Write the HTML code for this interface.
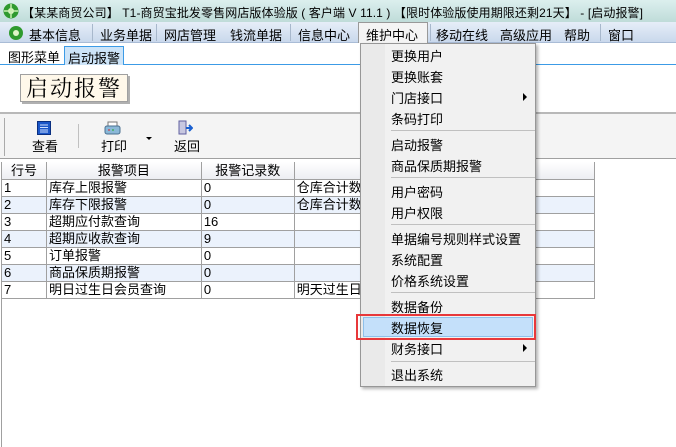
<!DOCTYPE html>
<html><head><meta charset="utf-8"><style>
*{margin:0;padding:0;box-sizing:border-box}
body{width:676px;height:447px;overflow:hidden;background:#fff;font-family:"Liberation Sans","Noto Sans CJK SC",sans-serif;font-size:12px;color:#000;position:relative}
.abs{position:absolute}
#title{left:0;top:0;width:676px;height:22px;background:linear-gradient(#dcefee,#bfdcd9);}
#title span{position:absolute;left:22px;top:4px;font-size:12px;white-space:nowrap;letter-spacing:0.1px}
#menubar{left:0;top:22px;width:676px;height:21px;background:linear-gradient(#e6eef8,#c9d8ec);border-bottom:1px solid #a9bcd6}
.mi{position:absolute;top:3px;font-size:13px;white-space:nowrap}
.msep{position:absolute;top:2px;width:1px;height:17px;background:#a8b8cc}
#tabs{left:0;top:43px;width:676px;height:22px;background:#fff;border-bottom:1px solid #3c9be6}
.tab{position:absolute;top:3px;height:19px;font-size:13px;padding:1px 3px}
#banner{left:20px;top:74px;width:108px;height:28px;background:#fff8ea;border:1px solid #a0a0a0;box-shadow:2px 2px 0 #b0b0b0;font-family:"Noto Serif CJK SC","Liberation Serif",serif;font-size:22px;line-height:26px;text-align:center;letter-spacing:2px}
#tb{left:0;top:112px;width:676px;height:47px;background:#f4f4f4;border-top:2px solid #b8b8b8;border-bottom:1px solid #a0a0a0}
.tbl{position:absolute;top:22px;font-size:13px}
#grid{left:1px;top:162px;width:594px;border-collapse:collapse;font-size:13px}
#grid td{border:1px solid #a0a0a0;height:17px;padding:0 2px;line-height:15px;white-space:nowrap;overflow:hidden}
#grid tr.h td{background:linear-gradient(#fff,#eceef2);text-align:center;border-top:none}
#grid tr.alt td{background:#ebf2fc}
#menu{left:360px;top:43px;width:176px;height:344px;background:#f1f1f1;border:1px solid #979797;box-shadow:2px 2px 3px rgba(0,0,0,.3)}
#menu .ic{position:absolute;left:0;top:0;width:24px;height:100%;background:#eaeaea}
.it{position:absolute;left:30px;font-size:13px;white-space:nowrap}
.sp{position:absolute;left:30px;width:144px;height:1px;background:#c0c0c0}
.arr{position:absolute;left:162px;width:0;height:0;border-left:4px solid #000;border-top:4px solid transparent;border-bottom:4px solid transparent}
</style></head><body>
<div id="title" class="abs">
<svg class="abs" style="left:3px;top:3px" width="16" height="16"><circle cx="8" cy="8" r="7.5" fill="#2f9a2f"/><circle cx="8" cy="8" r="3" fill="#dff5c8"/><path d="M8 1v14M1 8h14" stroke="#c8efb0" stroke-width="1.5"/></svg>
<span>【某某商贸公司】 T1-商贸宝批发零售网店版体验版 ( 客户端 V 11.1 ) 【限时体验版使用期限还剩21天】 - [启动报警]</span></div>
<div id="menubar" class="abs">
<svg class="abs" style="left:8px;top:3px" width="16" height="16"><circle cx="8" cy="8" r="7" fill="#2f9a2f"/><circle cx="8" cy="8" r="3" fill="#dff5c8"/></svg>
<span class="mi" style="left:29px">基本信息</span><div class="msep" style="left:92px"></div>
<span class="mi" style="left:100px">业务单据</span><div class="msep" style="left:156px"></div>
<span class="mi" style="left:164px">网店管理</span>
<span class="mi" style="left:230px">钱流单据</span><div class="msep" style="left:290px"></div>
<span class="mi" style="left:298px">信息中心</span>
<div class="abs" style="left:358px;top:0;width:70px;height:22px;background:#f4f4f4;border:1px solid #999;border-bottom:none"></div>
<span class="mi" style="left:366px">维护中心</span><div class="msep" style="left:430px"></div>
<span class="mi" style="left:436px">移动在线</span>
<span class="mi" style="left:500px">高级应用</span>
<span class="mi" style="left:564px">帮助</span><div class="msep" style="left:600px"></div>
<span class="mi" style="left:608px">窗口</span>
</div>
<div id="tabs" class="abs">
<span class="tab" style="left:5px">图形菜单</span>
<span class="tab" style="left:64px;background:#cde4f8;border:1px solid #3c9be6;border-bottom:none">启动报警</span>
</div>
<div id="banner" class="abs">启动报警</div>
<div id="tb" class="abs">
<div class="abs" style="left:4px;top:4px;width:1px;height:38px;background:#aaa"></div>
<svg class="abs" style="left:37px;top:7px" width="14" height="14"><rect x=".5" y=".5" width="13" height="13" fill="#1a56c8" stroke="#0a2f80"/><path d="M3 4h8M3 6.5h8M3 9h8M3 11h8" stroke="#cfe0ff"/></svg>
<span class="tbl" style="left:32px">查看</span>
<div class="abs" style="left:78px;top:10px;width:1px;height:24px;background:#c0c0c0"></div>
<svg class="abs" style="left:104px;top:7px" width="17" height="15"><rect x="4" y="1" width="9" height="5" fill="#fff" stroke="#777"/><rect x="1" y="5" width="15" height="8" rx="2" fill="#8ab8d8" stroke="#4a6f90"/><path d="M4 9h2" stroke="#d22"/><path d="M8 9h2" stroke="#2a2"/></svg>
<span class="tbl" style="left:101px">打印</span>
<div class="abs" style="left:146px;top:23px;border-left:3px solid transparent;border-right:3px solid transparent;border-top:3px solid #000"></div>
<svg class="abs" style="left:177px;top:6px" width="16" height="16"><rect x="2" y="1" width="7" height="13" fill="#c8c8e0" stroke="#6060a0"/><path d="M9 8h6M12 5l3 3-3 3" stroke="#1a60d0" stroke-width="2" fill="none"/></svg>
<span class="tbl" style="left:174px">返回</span>
</div>
<table id="grid" class="abs">
<colgroup><col style="width:45px"><col style="width:155px"><col style="width:93px"><col style="width:301px"></colgroup>
<tr class="h"><td>行号</td><td>报警项目</td><td>报警记录数</td><td></td></tr>
<tr><td>1</td><td>库存上限报警</td><td>0</td><td>仓库合计数量</td></tr>
<tr class="alt"><td>2</td><td>库存下限报警</td><td>0</td><td>仓库合计数量</td></tr>
<tr><td>3</td><td>超期应付款查询</td><td>16</td><td></td></tr>
<tr class="alt"><td>4</td><td>超期应收款查询</td><td>9</td><td></td></tr>
<tr><td>5</td><td>订单报警</td><td>0</td><td></td></tr>
<tr class="alt"><td>6</td><td>商品保质期报警</td><td>0</td><td></td></tr>
<tr><td>7</td><td>明日过生日会员查询</td><td>0</td><td>明天过生日的</td></tr>
</table>
<div class="abs" style="left:1px;top:298px;width:1px;height:149px;background:#a0a0a0"></div>
<div id="menu" class="abs"><div class="ic"></div>
<span class="it" style="top:2px">更换用户</span>
<span class="it" style="top:23px">更换账套</span>
<span class="it" style="top:44px">门店接口</span><div class="arr" style="top:49px"></div>
<span class="it" style="top:65px">条码打印</span>
<div class="sp" style="top:86px"></div>
<span class="it" style="top:91px">启动报警</span>
<span class="it" style="top:112px">商品保质期报警</span>
<div class="sp" style="top:133px"></div>
<span class="it" style="top:138px">用户密码</span>
<span class="it" style="top:159px">用户权限</span>
<div class="sp" style="top:180px"></div>
<span class="it" style="top:185px">单据编号规则样式设置</span>
<span class="it" style="top:206px">系统配置</span>
<span class="it" style="top:227px">价格系统设置</span>
<div class="sp" style="top:248px"></div>
<span class="it" style="top:253px">数据备份</span>
<div class="abs" style="left:2px;top:273px;width:170px;height:20px;background:#c4e0fa;border:1px solid #8ec0ea"></div>
<div class="abs" style="left:-5px;top:270px;width:180px;height:26px;border:2px solid #e8383a"></div>
<span class="it" style="top:274px">数据恢复</span>
<span class="it" style="top:295px">财务接口</span><div class="arr" style="top:300px"></div>
<div class="sp" style="top:317px"></div>
<span class="it" style="top:321px">退出系统</span>
</div>
</body></html>
